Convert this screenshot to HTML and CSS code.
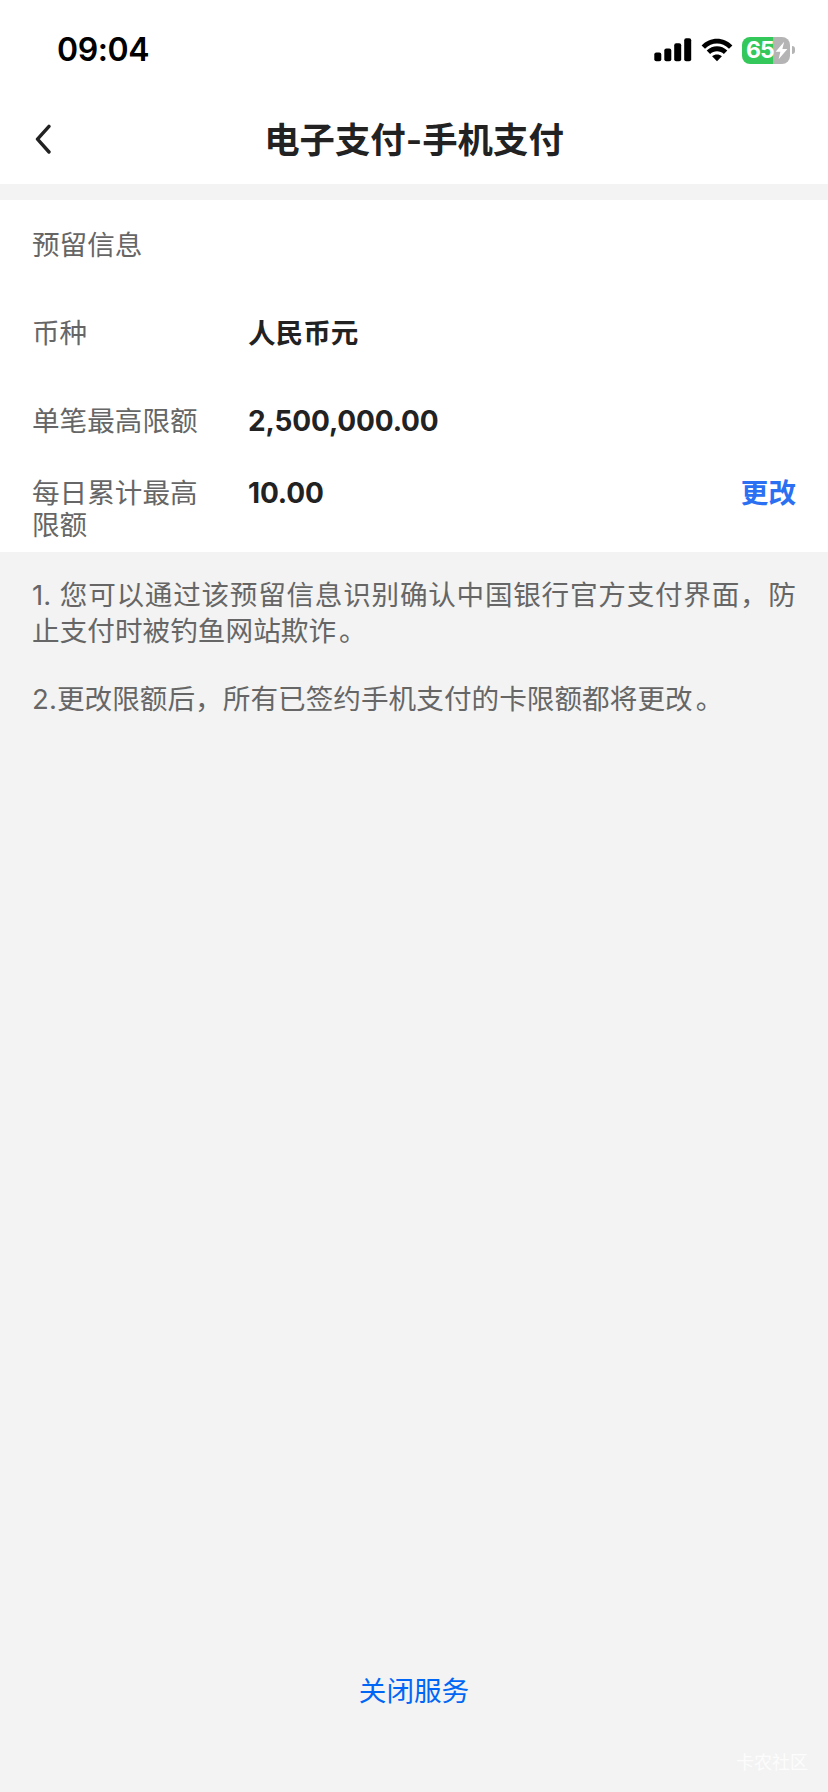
FILE: index.html
```html
<!DOCTYPE html>
<html lang="zh-CN">
<head>
<meta charset="utf-8">
<title>电子支付-手机支付</title>
<link rel="stylesheet" href="styles.css">
</head>
<body>
<div class="screen">
  <div class="status">
    <span class="time">09:04</span>
    <div class="indicators">
      <svg class="signal" width="38" height="24" viewBox="0 0 38 24">
        <rect x="0.3" y="14.5" width="7" height="8.8" rx="2"/>
        <rect x="10.3" y="10.5" width="7" height="12.8" rx="2"/>
        <rect x="20.2" y="5.3" width="7" height="18" rx="2"/>
        <rect x="30.2" y="0.3" width="7" height="23" rx="2"/>
      </svg>
      <svg class="wifi" width="32" height="24" viewBox="0 0 32 24">
        <path d="M0.6 7.4C9 -1.6 23 -1.6 31.4 7.4L28 10.8C21.3 3.8 10.7 3.8 4 10.8Z"/>
        <path d="M5.7 12.6C11.5 6.8 20.5 6.8 26.3 12.6L22.9 16C19 12.2 13 12.2 9.1 16Z"/>
        <path d="M11.1 18.2C13.8 15.8 18.2 15.8 20.9 18.2L16 23.3Z"/>
      </svg>
      <div class="battery">
        <span class="level">65</span>
        <svg class="bolt" width="13" height="19" viewBox="0 0 13 19"><path d="M9.2 0.8L0.6 10.8H5.4L3.6 18.2L12.4 8H7.4Z"/></svg>
      </div>
      <span class="cap"></span>
    </div>
  </div>
  <header class="nav">
    <svg class="back" width="20" height="32" viewBox="0 0 20 32"><path d="M17 2.4L5.5 15.2L17 28"/></svg>
    <h1 class="title">电子支付-手机支付</h1>
  </header>
  <main class="card">
    <div class="row"><span class="label">预留信息</span></div>
    <div class="row"><span class="label">币种</span><span class="value">人民币元</span></div>
    <div class="row"><span class="label">单笔最高限额</span><span class="value number">2,500,000.00</span></div>
    <div class="row tall"><span class="label">每日累计最高限额</span><span class="value number">10.00</span><a class="edit">更改</a></div>
  </main>
  <section class="notes">
    <p class="note"><span class="full">1. 您可以通过该预留信息识别确认中国银行官方支付界面，防</span>止支付时被钓鱼网站欺诈<span class="stop">。</span></p>
    <p class="note">2.更改限额后，所有已签约手机支付的卡限额都将更改<span class="stop">。</span></p>
  </section>
  <footer class="footer">
    <a class="close">关闭服务</a>
    <span class="mark">卡农社区</span>
  </footer>
</div>
</body>
</html>
```
FILE: styles.css
```css
* { box-sizing: border-box; }
body {
  margin: 0;
  background: #f3f3f3;
  color: #222;
  font-family: Inter, "Noto Sans CJK SC", sans-serif;
  font-size: 27.6px;
}
.screen { width: 828px; height: 1792px; display: flex; flex-direction: column; overflow: hidden; }
.status {
  height: 100px;
  background: #fff;
  display: flex;
  justify-content: space-between;
  align-items: center;
  padding: 0 33px 0 57px;
}
.time { color: #000; font-size: 32px; font-weight: 600; line-height: 40px; letter-spacing: -0.4px; }
.indicators { display: flex; align-items: center; fill: #000; }
.signal { margin-right: 9px; }
.wifi { margin-right: 9px; }
.battery {
  width: 48px;
  height: 27px;
  border-radius: 8px;
  background: linear-gradient(to right, #34c759 31px, #b4b4b4 31px);
  display: flex;
  align-items: center;
  padding-left: 4px;
}
.level { color: #fff; font-size: 23px; font-weight: 700; line-height: 27px; width: 29px; letter-spacing: -0.9px; }
.bolt { fill: #fff; }
.cap { width: 3px; height: 8px; margin-left: 2px; background: #b4b4b4; border-radius: 0 3px 3px 0; }
.nav {
  height: 84px;
  background: #fff;
  display: grid;
  grid-template-columns: 60px 1fr 60px;
  align-items: center;
  padding: 0 32px 5px;
}
.back { fill: none; stroke: #222; stroke-width: 3.4; stroke-linecap: round; stroke-linejoin: round; }
.title { margin: 0; padding-top: 2px; font-size: 35.4px; font-weight: 600; line-height: 48px; text-align: center; white-space: nowrap; }
.card { margin-top: 16px; height: 352px; background: #fff; padding: 1px 32px 0; line-height: 32px; }
.row { height: 88px; display: flex; align-items: center; }
.row.tall { align-items: flex-start; padding-top: 12px; }
.label { width: 168px; color: #666; }
.value { margin-left: 48px; font-weight: 600; }
.number { font-size: 28px; font-weight: 650; letter-spacing: -0.15px; }
.edit { margin-left: auto; color: #2b70f2; font-weight: 600; }
.notes { padding: 25px 32px 0; color: #666; line-height: 36.4px; }
.note { margin: 0 0 31px; letter-spacing: 0.05px; }
.full { display: block; text-align: justify; text-align-last: justify; text-justify: inter-character; white-space: nowrap; }
.stop { margin-left: 3px; }
.footer { margin-top: auto; display: flex; flex-direction: column; align-items: center; padding: 0 20px 17px; }
.close { color: #0066f5; line-height: 40px; }
.mark { align-self: flex-end; margin-top: 40px; color: rgba(255, 255, 255, 0.8); font-size: 18px; line-height: 24px; }
```
